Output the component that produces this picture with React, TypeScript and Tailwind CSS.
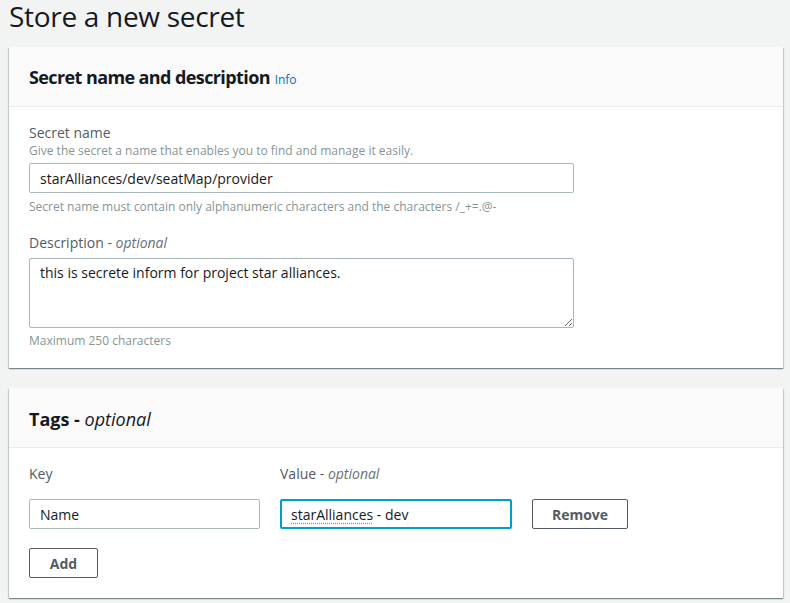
const font = { fontFamily: '"Open Sans", "Noto Sans", Arial, sans-serif' };

interface FieldProps {
  label: string;
  optional?: boolean;
}

const Label: React.FC<FieldProps> = ({ label, optional }) => (
  <div className="text-[14px] leading-[20px] text-[#545b64]">
    {label}
    {optional && (
      <>
        {' - '}
        <i className="text-[#687078]">optional</i>
      </>
    )}
  </div>
);

const Card: React.FC<{ title: React.ReactNode; children: React.ReactNode }> = ({ title, children }) => (
  <div className="bg-white shadow-[0_1px_1px_0_rgba(0,28,36,0.3),1px_1px_1px_0_rgba(0,28,36,0.15),-1px_1px_1px_0_rgba(0,28,36,0.15)]">
    <div className="bg-[#fafafa] border-b border-[#eaeded] px-5 pt-[3px] h-[60px] flex items-center">
      <h2 className="text-[18px] leading-[22px] font-bold text-[#16191f]">{title}</h2>
    </div>
    {children}
  </div>
);

export default function App() {
  return (
    <div style={font} className="min-h-[603px] bg-[#f2f3f3] pl-[9px] pr-[7px] pb-2 text-[#16191f]">
      <h1 className="text-[28px] leading-[32px] h-[47px] tracking-[-0.3px]">Store a new secret</h1>

      <Card
        title={
          <>
            <span className="tracking-[-0.6px]">Secret name and description</span>{' '}
            <span className="text-[12px] font-normal text-[#0073bb]">Info</span>
          </>
        }
      >
        <div className="px-5 pt-[16px] pb-[19px]">
          <Label label="Secret name" />
          <div className="text-[12px] leading-[16px] text-[#879596]">
            Give the secret a name that enables you to find and manage it easily.
          </div>
          <div className="mt-1 w-[545px] h-[30px] border border-[#aab7b8] rounded-[2px] px-[10px] flex items-center text-[14px]">
            starAlliances/dev/seatMap/provider
          </div>
          <div className="mt-[6px] text-[12px] leading-[16px] text-[#879596]">
            Secret name must contain only alphanumeric characters and the characters /_+=.@-
          </div>
          <div className="mt-[18px]">
            <Label label="Description" optional />
          </div>
          <textarea
            readOnly
            defaultValue="this is secrete inform for project star alliances."
            style={font}
            className="block mt-[5px] w-[545px] h-[70px] border border-[#aab7b8] rounded-[2px] px-[10px] py-[3px] text-[14px] leading-[22px] text-[#16191f] outline-none"
          />
          <div className="mt-[5px] text-[12px] leading-[16px] text-[#879596]">Maximum 250 characters</div>
        </div>
      </Card>

      <div className="h-5" />

      <Card
        title={
          <>
            Tags - <i className="font-normal">optional</i>
          </>
        }
      >
        <div className="px-5 pt-[16px] pb-[20px]">
          <div className="flex gap-5">
            <div className="w-[231px]">
              <Label label="Key" />
            </div>
            <div className="w-[232px]">
              <Label label="Value" optional />
            </div>
          </div>
          <div className="mt-[15px] flex gap-5 items-center">
            <div className="w-[231px] h-[30px] border border-[#aab7b8] rounded-[2px] px-[10px] flex items-center text-[14px]">
              Name
            </div>
            <div className="w-[232px] h-[30px] border-2 border-[#00a1c9] rounded-[2px] px-[9px] flex items-center text-[14px]">
              <span className="underline decoration-dotted decoration-[#879596] underline-offset-[3px]">
                starAlliances
              </span>
              &nbsp;- dev
            </div>
            <button className="w-[96px] h-[30px] border border-[#545b64] rounded-[2px] text-[14px] font-bold text-[#545b64] bg-white">
              Remove
            </button>
          </div>
          <button className="mt-[19px] w-[69px] h-[30px] border border-[#545b64] rounded-[2px] text-[14px] font-bold text-[#545b64] bg-white">
            Add
          </button>
        </div>
      </Card>
    </div>
  );
}
